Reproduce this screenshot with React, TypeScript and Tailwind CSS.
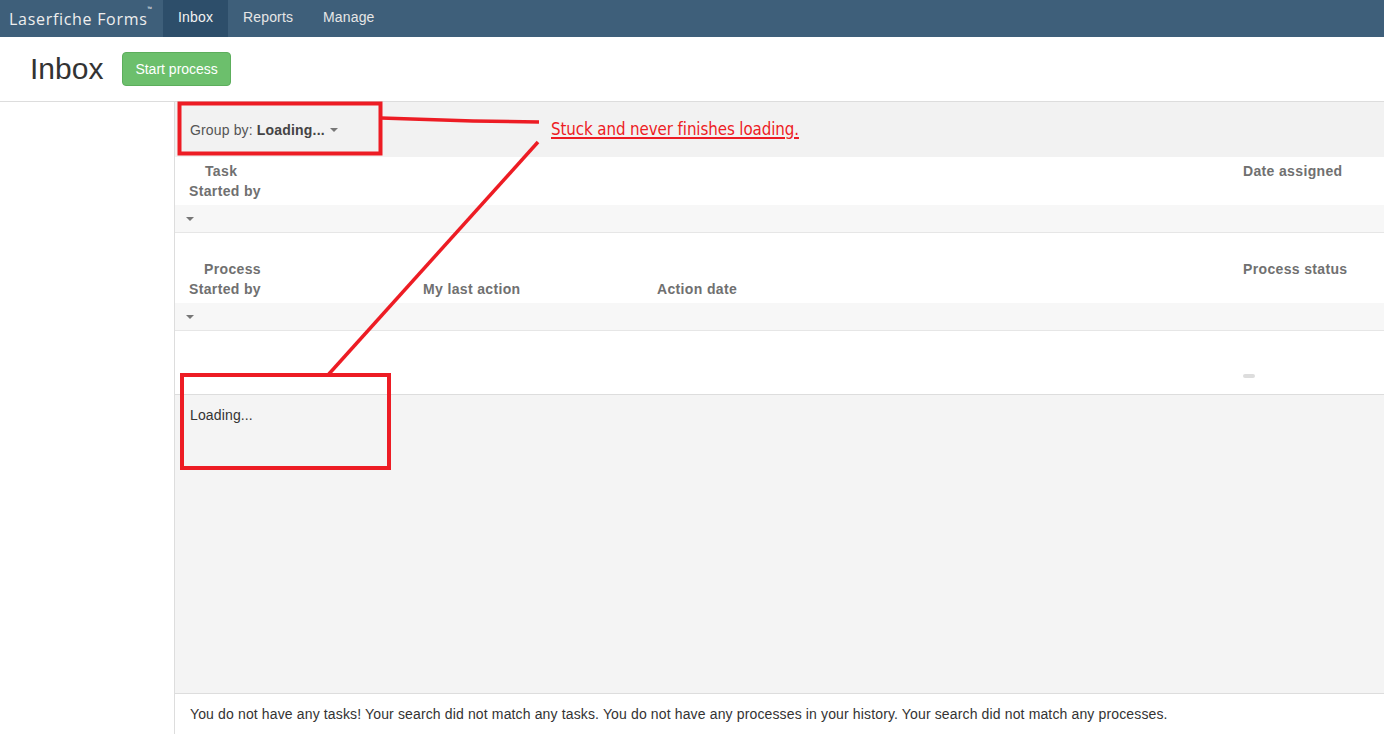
import React from 'react'

function Caret() {
  return <span className="inline-block w-0 h-0 border-l-[4px] border-r-[4px] border-t-[4px] border-l-transparent border-r-transparent border-t-[#777] align-middle" />
}

export default function App() {
  return (
    <div className="relative w-[1384px] h-[734px] overflow-hidden bg-white text-[14px] text-[#333] tracking-[0.14px]" style={{ fontFamily: '"Liberation Sans", Arial, sans-serif' }}>
      {/* Nav */}
      <nav className="h-[37px] bg-[#3e5f7a] flex items-center">
        <span className="pl-[9px] pr-[11px] text-[16px] tracking-[0.7px] text-[#eeeeee]" style={{ fontFamily: '"Open Sans", sans-serif' }}>
          Laserfiche Forms<sup className="text-[6px] align-top relative top-[2px] tracking-normal">™</sup>
        </span>
        <a className="h-full flex items-center px-[15px] pb-[3px] bg-[#2d4e6a] text-[#f2f2f2]">Inbox</a>
        <a className="h-full flex items-center px-[15px] pb-[3px] text-[#e6e6e6]">Reports</a>
        <a className="h-full flex items-center px-[15px] pb-[3px] text-[#e6e6e6]">Manage</a>
      </nav>

      {/* Header */}
      <div className="h-[65px] border-b border-[#dddddd] flex items-center pl-[30px] gap-[19px]">
        <h1 className="text-[30px] leading-none text-[#333] tracking-normal">Inbox</h1>
        <button className="h-[34px] px-[12px] rounded-[4px] bg-[#6cbf6c] border border-[#5cae5c] text-white text-[14px] tracking-normal">
          Start process
        </button>
      </div>

      <div className="flex h-[632px]">
        <div className="w-[175px] border-r border-[#dddddd] shrink-0" />
        <div className="flex-1 flex flex-col">
          {/* Group by */}
          <div className="h-[55px] bg-[#f2f2f2] flex items-center pl-[15px] pt-[1px]">
            <span className="text-[#555]">Group by: </span>
            <span className="font-bold text-[#444] ml-[4px] tracking-[0.2px]">Loading...</span>
            <span className="ml-[5px] flex items-center"><Caret /></span>
          </div>

          {/* Tasks table */}
          <div className="flex py-1 font-bold text-[#707070] leading-[20px] tracking-[0.35px]">
            <div className="flex-1 pl-[14px]">
              <div className="pl-[16px]">Task</div>
              <div>Started by</div>
            </div>
            <div className="w-[141px]">Date assigned</div>
          </div>
          <div className="h-[28px] bg-[#f7f7f7] border-b border-[#e6e6e6] flex items-center pl-[11px]">
            <Caret />
          </div>

          {/* Processes table */}
          <div className="flex pt-[26px] pb-1 font-bold text-[#707070] leading-[20px] tracking-[0.35px]">
            <div className="w-[248px] pl-[14px]">
              <div className="pl-[15px]">Process</div>
              <div>Started by</div>
            </div>
            <div className="w-[234px] flex flex-col justify-end">My last action</div>
            <div className="flex-1 flex flex-col justify-end">Action date</div>
            <div className="w-[141px]">Process status</div>
          </div>
          <div className="h-[28px] bg-[#f7f7f7] border-b border-[#e6e6e6] flex items-center pl-[11px]">
            <Caret />
          </div>
          <div className="h-[64px] border-b border-[#dddddd] flex justify-end items-end pb-[16px]">
            <div className="w-[141px]">
              <div className="w-[12px] h-[4px] rounded-full bg-[#dddddd]" />
            </div>
          </div>

          {/* Loading panel */}
          <div className="h-[299px] bg-[#f4f4f4] border-b border-[#dddddd] pl-[15px] pt-[10px]">
            Loading...
          </div>

          <div className="pl-[15px] pt-[10px] text-[#333]">
            You do not have any tasks! Your search did not match any tasks. You do not have any processes in your history. Your search did not match any processes.
          </div>
        </div>
      </div>

      {/* Annotations */}
      <svg className="absolute inset-0 pointer-events-none" width="1384" height="734" viewBox="0 0 1384 734">
        <rect x="179.5" y="103.5" width="201" height="50" fill="none" stroke="#ed1c24" strokeWidth="4" />
        <rect x="182" y="375" width="207" height="93" fill="none" stroke="#ed1c24" strokeWidth="4" />
        <polyline points="381,118 473,121 539,122" fill="none" stroke="#ed1c24" strokeWidth="3.5" />
        <line x1="538" y1="142" x2="328" y2="375" stroke="#ed1c24" strokeWidth="3.5" />
      </svg>
      <div
        className="absolute left-[551px] top-[118px] text-[16.8px] leading-[22px] text-[#ed1c24] underline decoration-[1.5px] underline-offset-[2px] tracking-[-0.1px]"
        style={{ fontFamily: '"Liberation Sans Narrow", "DejaVu Sans Condensed", sans-serif' }}
      >
        Stuck and never finishes loading.
      </div>
    </div>
  )
}
